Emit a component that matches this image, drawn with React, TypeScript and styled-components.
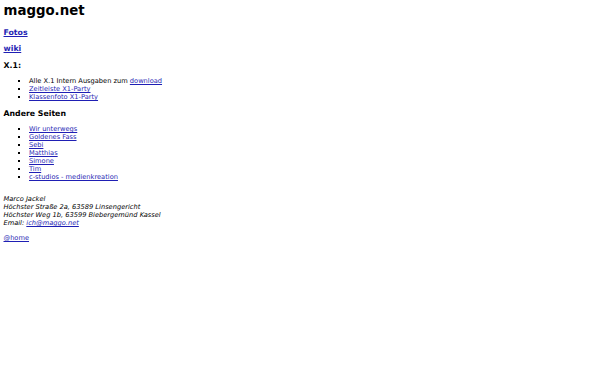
import React from "react";
import styled, { createGlobalStyle } from "styled-components";

const Global = createGlobalStyle`
  html, body { margin: 0; padding: 0; background: #fff; }
  body {
    font-family: "DejaVu Sans", Verdana, sans-serif;
    font-size: 6.67px;
    line-height: 8px;
    color: #000;
  }
  a { color: #1f1fb4; }
`;

const Page = styled.div`
  padding: 3px 3.5px;
`;

const Title = styled.h1`
  font-size: 13.33px;
  line-height: 16px;
  font-weight: bold;
  margin: 0 0 8.5px;
`;

const Heading = styled.h3`
  font-size: 7.8px;
  line-height: 9px;
  font-weight: bold;
  margin: 7.5px 0;
`;

const List = styled.ul`
  margin: 0;
  padding-left: 25.5px;
  list-style: square;
  li { line-height: 8px; }
`;

const Address = styled.address`
  font-style: italic;
  margin: 14px 0 0;
`;

const Para = styled.p`
  margin: 7px 0 0;
`;

export default function App() {
  return (
    <>
      <Global />
      <Page>
        <Title>maggo.net</Title>
        <Heading><a href="#">Fotos</a></Heading>
        <Heading><a href="#">wiki</a></Heading>
        <Heading>X.1:</Heading>
        <List>
          <li>Alle X.1 Intern Ausgaben zum <a href="#">download</a></li>
          <li><a href="#">Zeitleiste X1-Party</a></li>
          <li><a href="#">Klassenfoto X1-Party</a></li>
        </List>
        <Heading>Andere Seiten</Heading>
        <List>
          <li><a href="#">Wir unterwegs</a></li>
          <li><a href="#">Goldenes Fass</a></li>
          <li><a href="#">Sebi</a></li>
          <li><a href="#">Matthias</a></li>
          <li><a href="#">Simone</a></li>
          <li><a href="#">Tim</a></li>
          <li><a href="#">c-studios - medienkreation</a></li>
        </List>
        <Address>
          Marco Jackel<br />
          Höchster Straße 2a, 63589 Linsengericht<br />
          Höchster Weg 1b, 63599 Biebergemünd Kassel<br />
          Email: <a href="#">ich@maggo.net</a>
        </Address>
        <Para><a href="#">@home</a></Para>
      </Page>
    </>
  );
}
